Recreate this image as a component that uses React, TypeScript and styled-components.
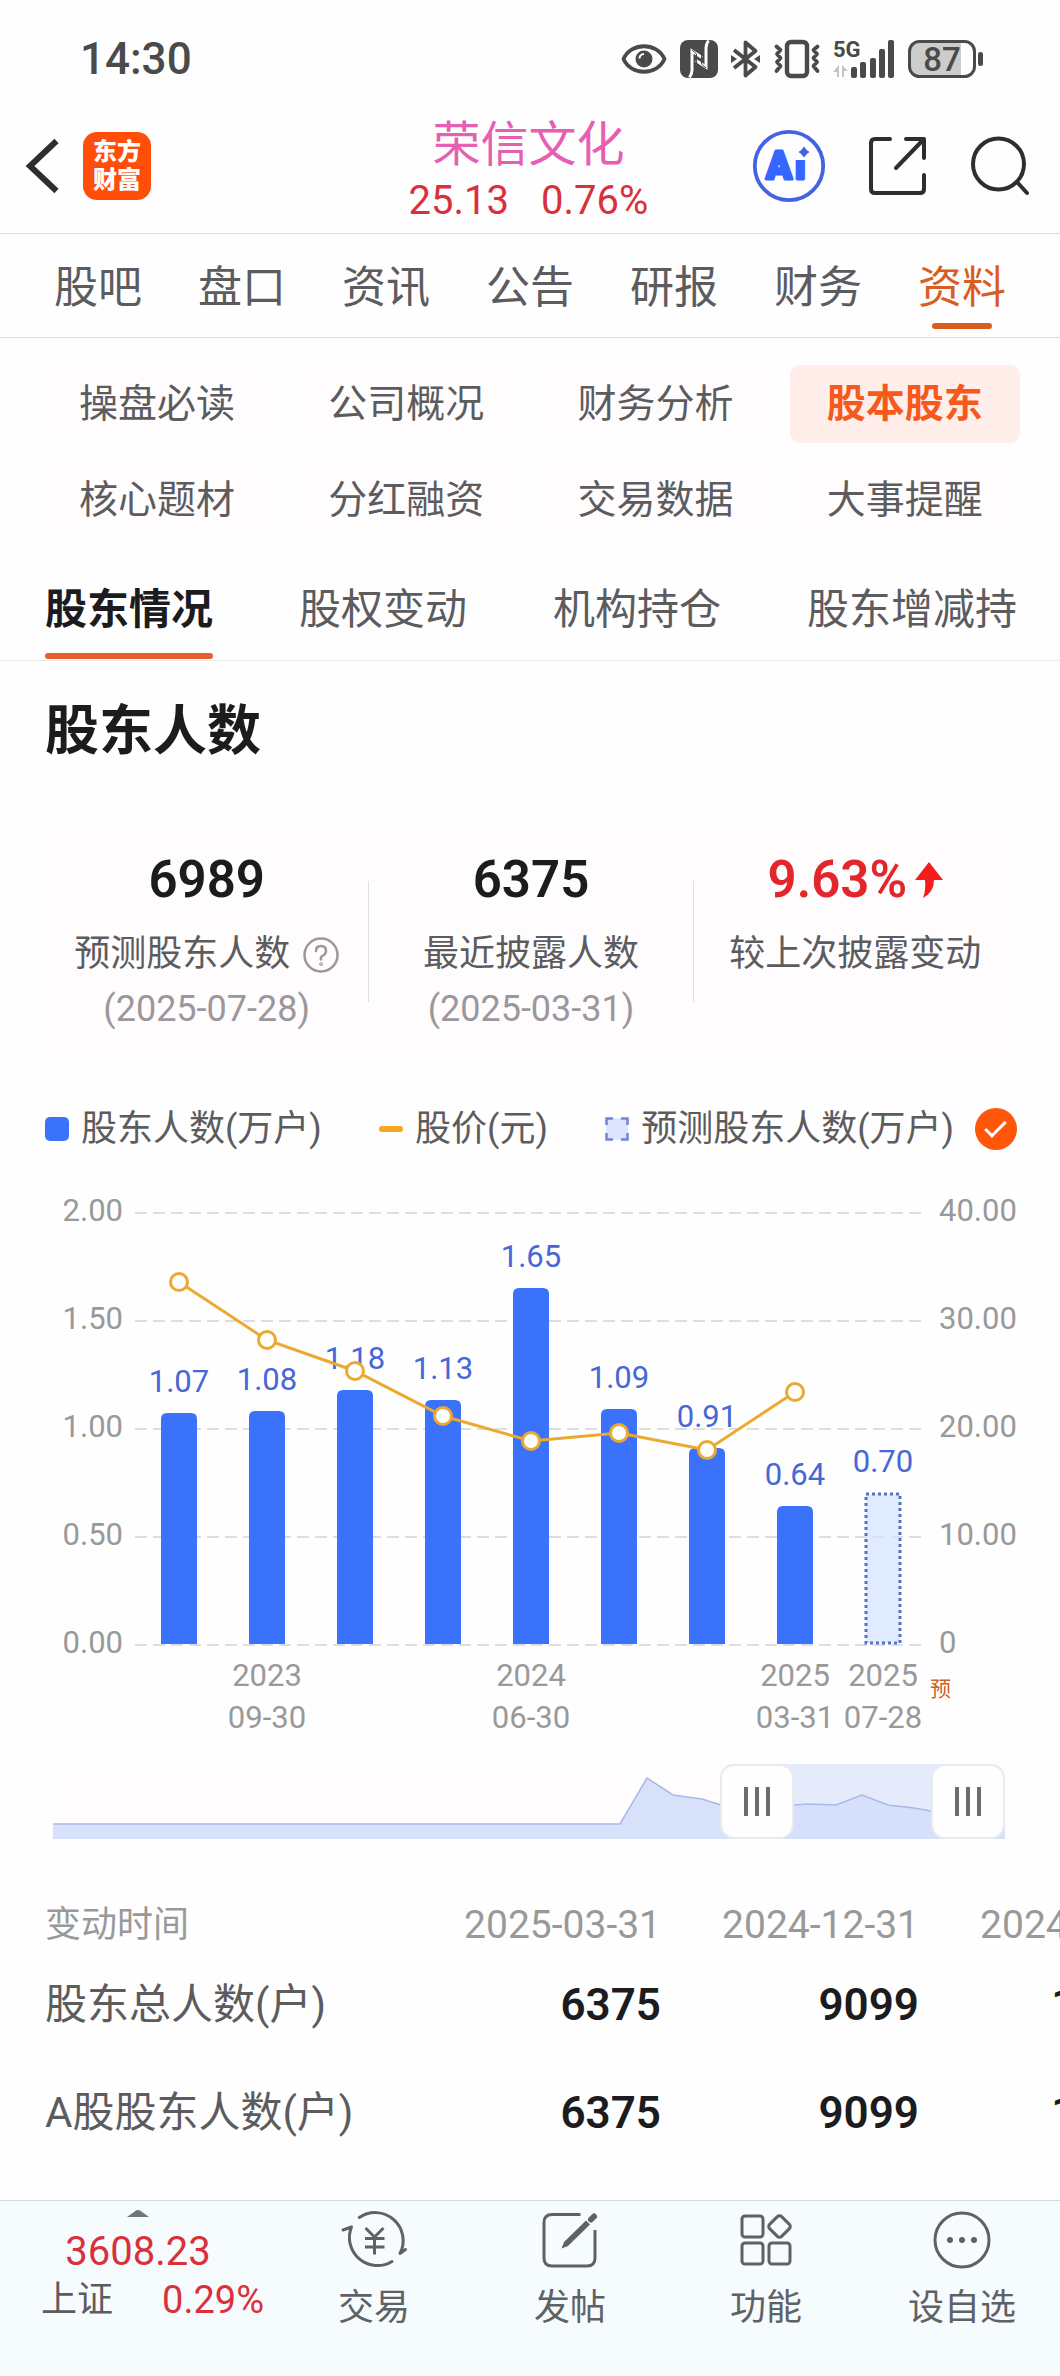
import React, { useState } from 'react';
import styled, { createGlobalStyle, css } from 'styled-components';

const color = {
  page: '#fefefe',
  ink: '#1c1c1e',
  text: '#5c5c5e',
  muted: '#999999',
  line: '#dcdcde',
  orange: '#d95c20',
  brand: '#ff4d0a',
  red: '#d9303a',
  blue: '#3b72fb',
  label: '#4767d6',
  price: '#eca92f',
};

const GlobalStyle = createGlobalStyle`
  *, *::before, *::after { box-sizing: border-box; }
  body {
    margin: 0;
    background: ${color.page};
    color: ${color.text};
    font-family: Roboto, "Noto Sans CJK SC", sans-serif;
  }
  button {
    padding: 0;
    border: 0;
    background: none;
    color: inherit;
    font: inherit;
    cursor: pointer;
  }
  a { color: inherit; text-decoration: none; }
  svg { display: block; overflow: visible; }
`;

const Page = styled.div`
  width: 100%;
  overflow-x: hidden;
  background: ${color.page};
`;

/* ---------- status bar ---------- */

const StatusBar = styled.div`
  display: flex;
  align-items: center;
  justify-content: space-between;
  height: 99px;
  padding: 18px 76px 0 80px;
  color: #4a4a4a;
`;

const Clock = styled.time`
  font-size: 44px;
  line-height: 48px;
  font-weight: 500;
`;

const StatusIcons = styled.div`
  display: flex;
  align-items: center;
  gap: 13px;
`;

/* ---------- header ---------- */

const Header = styled.header`
  display: grid;
  grid-template-columns: 1fr auto 1fr;
  align-items: center;
  height: 135px;
  padding: 0 30px 0 27px;
  border-bottom: 1px solid ${color.line};
`;

const HeaderStart = styled.div`
  display: flex;
  align-items: center;
  gap: 24px;
`;

const HeaderEnd = styled.div`
  display: flex;
  align-items: center;
  justify-content: flex-end;
  gap: 44px;
`;

const AppLogo = styled.span`
  display: flex;
  align-items: center;
  justify-content: center;
  width: 68px;
  height: 68px;
  border-radius: 14px;
  background: ${color.brand};
  color: #fff;
  font-size: 24px;
  line-height: 28px;
  font-weight: 900;
  text-align: center;
`;

const StockTitle = styled.div`
  padding-top: 14px;
  text-align: center;
`;

const StockName = styled.h1`
  margin: 0;
  color: #e65fb0;
  font-size: 48px;
  line-height: 56px;
  font-weight: 400;
`;

const Quote = styled.div`
  display: flex;
  justify-content: center;
  gap: 32px;
  color: ${color.red};
  font-size: 40px;
  line-height: 56px;
`;

/* ---------- navigation ---------- */

const MainTabs = styled.nav`
  display: grid;
  grid-template-columns: repeat(7, 1fr);
  padding: 0 26px;
  border-bottom: 1px solid ${color.line};
`;

const MainTab = styled.a<{ $active?: boolean }>`
  position: relative;
  padding-top: 5px;
  font-size: 44px;
  line-height: 98px;
  text-align: center;
  ${(p) =>
    p.$active &&
    css`
      color: ${color.orange};
      &::after {
        content: '';
        position: absolute;
        bottom: 8px;
        left: 50%;
        width: 60px;
        height: 6px;
        margin-left: -30px;
        border-radius: 3px;
        background: ${color.orange};
      }
    `}
`;

const Pills = styled.nav`
  display: grid;
  grid-template-columns: repeat(4, 1fr);
  gap: 18px 19px;
  padding: 27px 40px 17px 42px;
`;

const Pill = styled.a<{ $active?: boolean }>`
  border-radius: 10px;
  background: ${(p) => (p.$active ? '#ffeee9' : '#fffcfe')};
  color: ${(p) => (p.$active ? '#f55a1c' : color.text)};
  font-size: 39px;
  line-height: 78px;
  font-weight: ${(p) => (p.$active ? 700 : 400)};
  text-align: center;
`;

const SubTabs = styled.nav`
  display: flex;
  justify-content: space-between;
  padding: 0 43px 0 45px;
  border-bottom: 1px solid #ececee;
`;

const SubTab = styled.a<{ $active?: boolean }>`
  position: relative;
  padding-top: 4px;
  font-size: 42px;
  line-height: 100px;
  ${(p) =>
    p.$active &&
    css`
      color: ${color.ink};
      font-weight: 700;
      &::after {
        content: '';
        position: absolute;
        right: 0;
        bottom: 1px;
        left: 0;
        height: 6px;
        border-radius: 3px;
        background: #e4602e;
      }
    `}
`;

/* ---------- summary ---------- */

const SectionTitle = styled.h2`
  margin: 0;
  padding: 39px 45px 53px;
  color: ${color.ink};
  font-size: 54px;
  line-height: 64px;
  font-weight: 700;
`;

const Summary = styled.section`
  display: flex;
  align-items: center;
  margin: 0 43px 0 45px;
  border-radius: 14px;
  background: #fffcfe;
`;

const Divider = styled.span`
  width: 1px;
  height: 121px;
  background: #dedee8;
`;

const Stat = styled.div`
  display: flex;
  flex: 1;
  flex-direction: column;
  align-items: center;
  align-self: stretch;
  padding: 33px 0 28px;
`;

const StatValue = styled.div<{ $up?: boolean }>`
  display: flex;
  align-items: center;
  gap: 8px;
  margin-bottom: 17px;
  color: ${(p) => (p.$up ? '#e3262c' : color.ink)};
  font-size: 51px;
  line-height: 60px;
  font-weight: 600;
`;

const StatLabel = styled.div`
  display: flex;
  align-items: center;
  gap: 13px;
  font-size: 36px;
  line-height: 55px;
`;

const StatDate = styled.div`
  color: #9c979c;
  font-size: 36px;
  line-height: 55px;
`;

/* ---------- legend ---------- */

const Legend = styled.div`
  display: flex;
  align-items: center;
  justify-content: space-between;
  padding: 41px 43px 0 45px;
`;

const LegendItem = styled.span`
  display: flex;
  align-items: center;
  gap: 12px;
  font-size: 36px;
  line-height: 46px;
`;

const BarKey = styled.i`
  width: 24px;
  height: 24px;
  border-radius: 5px;
  background: ${color.blue};
`;

const LineKey = styled.i`
  width: 24px;
  height: 6px;
  border-radius: 3px;
  background: #f5a623;
`;

const ForecastToggle = styled.label`
  display: flex;
  align-items: center;
  gap: 21px;
`;

const CheckBox = styled.input`
  display: grid;
  place-items: center;
  appearance: none;
  width: 42px;
  height: 42px;
  margin: 0;
  border-radius: 50%;
  background: #d5d5d8;
  &:checked { background: #ff560a; }
  &::after {
    content: '';
    width: 21px;
    height: 11px;
    border: solid #fff;
    border-width: 0 0 3px 3px;
    margin-bottom: 6px;
    transform: rotate(-45deg);
  }
`;

const ChartSvg = styled.svg`
  width: 100%;
  height: auto;
  font-size: 31px;
`;

/* ---------- range brush ---------- */

const Brush = styled.div`
  position: relative;
  height: 75px;
  margin: 24px 55px 0 53px;
  background: #fffcfe;
`;

const BrushSvg = styled.svg`
  width: 100%;
  height: 100%;
`;

const BrushInput = styled.input`
  position: absolute;
  inset: 0;
  width: 100%;
  height: 100%;
  margin: 0;
  appearance: none;
  background: none;
  pointer-events: none;
  &::-webkit-slider-thumb {
    appearance: none;
    width: 74px;
    height: 75px;
    border: 2px solid #e9e9ee;
    border-radius: 14px;
    background:
      linear-gradient(#6c6c6e, #6c6c6e) 22px 50% / 4px 29px no-repeat,
      linear-gradient(#6c6c6e, #6c6c6e) 33px 50% / 4px 29px no-repeat,
      linear-gradient(#6c6c6e, #6c6c6e) 44px 50% / 4px 29px no-repeat,
      #fefefe;
    pointer-events: auto;
  }
`;

/* ---------- table ---------- */

const TableScroller = styled.div`
  overflow: hidden;
  padding: 60px 0 33px 45px;
`;

const DataTable = styled.table`
  width: 1132px;
  table-layout: fixed;
  border-collapse: collapse;
`;

const LabelCol = styled.col`
  width: 358px;
`;

const HeadCell = styled.th`
  height: 52px;
  padding: 0;
  color: ${color.muted};
  font-size: 39px;
  line-height: 52px;
  font-weight: 400;
  text-align: right;
  &:first-child {
    font-size: 36px;
    text-align: left;
  }
`;

const RowLabel = styled.th`
  height: 108px;
  padding: 0;
  font-size: 42px;
  line-height: 56px;
  font-weight: 400;
  text-align: left;
`;

const ValueCell = styled.td`
  height: 108px;
  padding: 0;
  color: ${color.ink};
  font-size: 44px;
  line-height: 56px;
  font-weight: 600;
  text-align: right;
`;

/* ---------- bottom bar ---------- */

const BottomBar = styled.footer`
  display: flex;
  height: 176px;
  border-top: 1px solid #d6d9de;
  background: #f6fbfe;
`;

const IndexPanel = styled.button`
  display: flex;
  flex-direction: column;
  align-items: center;
  width: 276px;
  padding-top: 9px;
`;

const IndexValue = styled.span`
  margin-top: 10px;
  color: ${color.red};
  font-size: 40px;
  line-height: 49px;
`;

const IndexRow = styled.span`
  display: flex;
  justify-content: space-between;
  width: 100%;
  padding: 0 12px 0 41px;
  font-size: 36px;
  line-height: 49px;
`;

const IndexChange = styled.span`
  color: ${color.red};
  font-size: 38px;
`;

const Actions = styled.nav`
  display: grid;
  flex: 1;
  grid-template-columns: repeat(4, 1fr);
`;

const Action = styled.button`
  display: flex;
  flex-direction: column;
  align-items: center;
  gap: 14px;
  padding-top: 9px;
  color: #5e6265;
  font-size: 36px;
  line-height: 49px;
`;

/* ---------- icons ---------- */

const EyeIcon = () => (
  <svg width="46" height="38" viewBox="0 0 46 38">
    <path d="M2.500 19C10 2 36 2 43.500 19C36 36 10 36 2.500 19Z" fill="none" stroke="#4a4a4a" strokeWidth="3.800" strokeLinejoin="round" />
    <circle cx="23" cy="19" r="8.500" fill="#4a4a4a" />
    <path d="M18.500 18.500a4.500 4.500 0 0 1 4.500-4.500" fill="none" stroke="#fefefe" strokeWidth="2" />
  </svg>
);

const NfcIcon = () => (
  <svg width="38" height="38" viewBox="0 0 38 38">
    <rect width="38" height="38" rx="8" fill="#4a4a4a" />
    <path d="M8 9.500L23 24.500M15 14L30 28.500" fill="none" stroke="#4a4a4a" strokeWidth="2" />
    <path d="M9.500 37.500Q12 34 12 30V11L22 17.500M28.500 .5Q26 4 26 8V27L16 20.500" fill="none" stroke="#fefefe" strokeWidth="3" />
    <path d="M12 10L16.500 14V30M26 28L21.500 24V8" fill="none" stroke="#4a4a4a" strokeWidth="1" />
  </svg>
);

const BluetoothIcon = () => (
  <svg width="30" height="38" viewBox="0 0 30 38">
    <path d="M3 10L24.500 27L14.500 35.500V2.500L24.500 11L3 28" fill="none" stroke="#4a4a4a" strokeWidth="3.800" strokeLinejoin="round" />
    <path d="M0 15L6 19L0 23ZM29 15L23 19L29 23Z" fill="#4a4a4a" />
  </svg>
);

const VibrateIcon = () => (
  <svg width="46" height="38" viewBox="0 0 46 38" fill="none" stroke="#4a4a4a" strokeLinecap="round" strokeLinejoin="round">
    <rect x="13" y="2" width="20" height="34" rx="4" strokeWidth="4.400" />
    <path d="M2.500 6.500L6.500 10L3 14L6.500 18L3 22L6.500 26L2.500 31M43.500 6.500L39.500 10L43 14L39.500 18L43 22L39.500 26L43.500 31" strokeWidth="3.800" />
  </svg>
);

const SignalIcon = () => (
  <svg width="62" height="38" viewBox="0 0 62 38">
    <text x="0" y="17" fontSize="22" fontWeight="700" fill="#4a4a4a">5G</text>
    <path d="M6 25V37H4V32H0ZM9 25L15 31H11V37H9Z" fill="#c4c4c4" />
    <g fill="#4a4a4a">
      <rect x="18" y="27" width="6" height="11" rx="2" />
      <rect x="27" y="22" width="6" height="16" rx="2" />
      <rect x="37" y="18" width="6" height="20" rx="2" />
      <rect x="46" y="9" width="6" height="29" rx="2" />
      <rect x="55" y="0" width="6" height="38" rx="2" />
    </g>
  </svg>
);

const BatteryIcon = () => (
  <svg width="76" height="38" viewBox="0 0 76 38">
    <path d="M12 2H53V36H12Q2 36 2 26V12Q2 2 12 2Z" fill="#cccccc" />
    <rect x="1.500" y="1.500" width="65" height="35" rx="10" fill="none" stroke="#4a4a4a" strokeWidth="3" />
    <rect x="70" y="12" width="5" height="14" rx="2.500" fill="#4a4a4a" />
    <text x="34" y="30.500" fontSize="33" fontWeight="500" textAnchor="middle" fill="#4a4a4a">87</text>
  </svg>
);

const BackIcon = () => (
  <svg width="32" height="56" viewBox="0 0 32 56">
    <path d="M29.500 3L3 28L29.500 53" fill="none" stroke="#2e2e30" strokeWidth="6" />
  </svg>
);

const AiIcon = () => (
  <svg width="72" height="72" viewBox="0 0 72 72">
    <circle cx="36" cy="36" r="34.200" fill="none" stroke="#4463e2" strokeWidth="3.800" />
    <text x="13" y="49" fontSize="38" fontWeight="900" fill="#3566ff" stroke="#3566ff" strokeWidth="3" strokeLinejoin="round">
      A<tspan dx="3">i</tspan>
    </text>
    <rect x="41" y="14" width="18" height="16" fill="#fefefe" />
    <path d="M51 16.500Q53 20 56.500 22Q53 24 51 27.500Q49 24 45.500 22Q49 20 51 16.500Z" fill="#4463e2" />
  </svg>
);

const ShareIcon = () => (
  <svg width="58" height="60" viewBox="0 0 58 60" fill="none" stroke="#2e2e30" strokeWidth="4" strokeLinecap="round" strokeLinejoin="round">
    <path d="M21 3H6Q2 3 2 7V53Q2 57 6 57H51Q55 57 55 53V39M37 3H55V22M55 3L27 32" />
  </svg>
);

const SearchIcon = () => (
  <svg width="59" height="60" viewBox="0 0 59 60" fill="none" stroke="#2e2e30" strokeWidth="4" strokeLinecap="round">
    <circle cx="27.500" cy="28" r="25.500" />
    <path d="M46 46L56 57" />
  </svg>
);

const HelpIcon = () => (
  <svg width="36" height="36" viewBox="0 0 36 36" fill="none" stroke="#9c979c" strokeWidth="2.500" strokeLinecap="round">
    <circle cx="18" cy="18" r="16.500" />
    <path d="M13 14Q13 9 18 9T23 14Q23 17 20 18.500T18 22.500" />
    <circle cx="18" cy="27" r=".6" />
  </svg>
);

const UpArrow = () => (
  <svg width="28" height="38" viewBox="0 0 28 38">
    <path d="M14 1L28 19H19Q19 31 8 37Q11 29 10 19H0Z" fill="#f51c1c" />
  </svg>
);

const ForecastKey = () => (
  <svg width="24" height="24" viewBox="0 0 24 24">
    <rect x="1" y="1" width="22" height="22" fill="#dde5fc" />
    <path d="M1.500 8V1.500H8M16 1.500H22.500V8M22.500 16V22.500H16M8 22.500H1.500V16" fill="none" stroke="#6f84dc" strokeWidth="2.500" />
  </svg>
);

const Caret = () => (
  <svg width="22" height="7" viewBox="0 0 22 7">
    <path d="M0 7L9 .5Q11-.5 13 .5L22 7Z" fill="#6f7578" />
  </svg>
);

const actionSvg = { height: 60, fill: 'none', stroke: '#5e6265', strokeWidth: 3, strokeLinecap: 'round', strokeLinejoin: 'round' } as const;

const TradeIcon = () => (
  <svg width="66" viewBox="0 0 66 60" {...actionSvg}>
    <path d="M18.300 7.500A28 28 0 0 1 59 43.500L64.500 39.500M51 51.500A28 28 0 0 1 10.500 17L2 20" />
    <path d="M24.500 18L33.500 27L42.500 18M24 28.500H43.500M24 37H43.500M33.500 27V44.500" strokeLinecap="butt" />
  </svg>
);

const PostIcon = () => (
  <svg width="56" viewBox="0 0 56 60" {...actionSvg}>
    <path d="M38.500 4.500H10Q2 4.500 2 12.500V48Q2 56 10 56H45Q53 56 53 48V20" strokeLinecap="butt" />
    <path d="M19.500 38.500L22 32L44 10.500L48 14.500L26 36Z" fill="#5e6265" stroke="none" />
    <path d="M49 9.500L52 6.500" strokeWidth="6" />
  </svg>
);

const FeaturesIcon = () => (
  <svg width="52" viewBox="0 0 52 60" {...actionSvg}>
    <rect x="2" y="6" width="21" height="21" rx="3" />
    <rect x="2" y="33" width="21" height="21" rx="3" />
    <rect x="29" y="33" width="21" height="21" rx="3" />
    <rect x="31" y="8" width="17" height="17" rx="3" transform="rotate(45 39.500 16.500)" />
  </svg>
);

const MoreIcon = () => (
  <svg width="58" viewBox="0 0 58 60" {...actionSvg}>
    <circle cx="29" cy="30" r="27" />
    <g fill="#5e6265" stroke="none">
      <circle cx="17" cy="30" r="3" />
      <circle cx="29" cy="30" r="3" />
      <circle cx="41" cy="30" r="3" />
    </g>
  </svg>
);

/* ---------- chart ---------- */

type Point = { holders: number; price?: number; date?: [string, string]; forecast?: boolean };

const points: Point[] = [
  { holders: 1.07, price: 33.6 },
  { holders: 1.08, price: 28.2, date: ['2023', '09-30'] },
  { holders: 1.18, price: 25.4 },
  { holders: 1.13, price: 21.25 },
  { holders: 1.65, price: 18.9, date: ['2024', '06-30'] },
  { holders: 1.09, price: 19.6 },
  { holders: 0.91, price: 18.05 },
  { holders: 0.64, price: 23.4, date: ['2025', '03-31'] },
  { holders: 0.7, date: ['2025', '07-28'], forecast: true },
];

const BASE = 493;
const STEP = 108;
const centerX = (i: number) => 179 + i * 88;
const holdersY = (v: number) => Math.floor(BASE - v * STEP * 2);
const priceY = (v: number) => Math.round(BASE - (v * STEP) / 10);

const ticks = [
  ['0.00', '0'],
  ['0.50', '10.00'],
  ['1.00', '20.00'],
  ['1.50', '30.00'],
  ['2.00', '40.00'],
];

function HoldersChart({ showForecast }: { showForecast: boolean }) {
  const shown = points.filter((p) => showForecast || !p.forecast);
  const line = points
    .map((p, i) => (p.price === undefined ? '' : `${centerX(i)},${priceY(p.price)}`))
    .join(' ')
    .trim();
  return (
    <ChartSvg viewBox="0 0 1060 588" role="img" aria-label="股东人数与股价">
      {ticks.map(([left, right], i) => (
        <g key={left} fill={color.muted}>
          <line x1="135" x2="922" y1={BASE - i * STEP} y2={BASE - i * STEP} stroke="#dedee0" strokeWidth="2" strokeDasharray="12 6" />
          <text x="123" y={BASE + 8 - i * STEP} textAnchor="end">{left}</text>
          <text x="939" y={BASE + 8 - i * STEP}>{right}</text>
        </g>
      ))}
      {shown.map((p, i) => {
        const x = centerX(i);
        const y = holdersY(p.holders);
        return (
          <g key={i}>
            {p.forecast ? (
              <rect x={x - 17} y={y + 1} width="34" height={BASE - y - 3} fill="#d3e3ff" fillOpacity=".7" stroke="#5670c4" strokeWidth="3" strokeDasharray="3 3" />
            ) : (
              <path d={`M${x - 18} ${BASE - 1}V${y + 6}q0-6 6-6h24q6 0 6 6V${BASE - 1}z`} fill={color.blue} />
            )}
            <text x={x} y={y - 21} textAnchor="middle" fill={color.label}>{p.holders.toFixed(2)}</text>
            {p.date && (
              <g fill={color.muted} textAnchor="middle">
                <text x={x} y={BASE + 41}>{p.date[0]}</text>
                <text x={x} y={BASE + 83}>{p.date[1]}</text>
              </g>
            )}
          </g>
        );
      })}
      {showForecast && <text x="930" y="544" fontSize="21" fill="#d2601e">预</text>}
      <polyline points={line} fill="none" stroke={color.price} strokeWidth="3" />
      {points.map((p, i) =>
        p.price === undefined ? null : (
          <circle key={i} cx={centerX(i)} cy={priceY(p.price)} r="8.500" fill="#fff" stroke={color.price} strokeWidth="3" />
        ),
      )}
    </ChartSvg>
  );
}

const BRUSH_MAX = 1000;

function RangeBrush() {
  const [start, setStart] = useState(760);
  const [end, setEnd] = useState(BRUSH_MAX);
  const profile = '0,60 567,60 594,14 620,31 649,35 668,41 741,41 755,40 783,41 809,31 835,41 861,44 878,47 952,52';
  const at = (v: number) => 37 + (v / BRUSH_MAX) * 878;
  return (
    <Brush>
      <BrushSvg viewBox="0 0 952 75" preserveAspectRatio="none">
        <rect x={at(start)} width={at(end) - at(start)} height="75" fill="#e6ebfc" />
        <polygon points={`0,75 ${profile} 952,75`} fill="#d5dffa" fillOpacity=".95" />
        <polyline points={profile} fill="none" stroke="#a9b9e6" strokeWidth="1.500" />
      </BrushSvg>
      <BrushInput type="range" aria-label="开始" min={0} max={BRUSH_MAX} value={start} onChange={(e) => setStart(Math.min(+e.target.value, end))} />
      <BrushInput type="range" aria-label="结束" min={0} max={BRUSH_MAX} value={end} onChange={(e) => setEnd(Math.max(+e.target.value, start))} />
    </Brush>
  );
}

/* ---------- page ---------- */

const mainTabs = ['股吧', '盘口', '资讯', '公告', '研报', '财务', '资料'];
const pills = ['操盘必读', '公司概况', '财务分析', '股本股东', '核心题材', '分红融资', '交易数据', '大事提醒'];
const subTabs = ['股东情况', '股权变动', '机构持仓', '股东增减持'];
const dates = ['2025-03-31', '2024-12-31', '2024-09-30'];
const rows = [
  { label: '股东总人数(户)', values: ['6375', '9099', '10948'] },
  { label: 'A股股东人数(户)', values: ['6375', '9099', '10948'] },
];
const actions = [
  { label: '交易', Icon: TradeIcon },
  { label: '发帖', Icon: PostIcon },
  { label: '功能', Icon: FeaturesIcon },
  { label: '设自选', Icon: MoreIcon },
];

export default function App() {
  const [forecast, setForecast] = useState(true);
  return (
    <Page>
      <GlobalStyle />
      <StatusBar>
        <Clock>14:30</Clock>
        <StatusIcons>
          <EyeIcon />
          <NfcIcon />
          <BluetoothIcon />
          <VibrateIcon />
          <SignalIcon />
          <BatteryIcon />
        </StatusIcons>
      </StatusBar>

      <Header>
        <HeaderStart>
          <button aria-label="返回"><BackIcon /></button>
          <AppLogo>东方<br />财富</AppLogo>
        </HeaderStart>
        <StockTitle>
          <StockName>荣信文化</StockName>
          <Quote>
            <span>25.13</span>
            <span>0.76%</span>
          </Quote>
        </StockTitle>
        <HeaderEnd>
          <button aria-label="智能助手"><AiIcon /></button>
          <button aria-label="分享"><ShareIcon /></button>
          <button aria-label="搜索"><SearchIcon /></button>
        </HeaderEnd>
      </Header>

      <MainTabs>
        {mainTabs.map((t) => (
          <MainTab key={t} href="#" $active={t === '资料'}>{t}</MainTab>
        ))}
      </MainTabs>

      <Pills>
        {pills.map((t) => (
          <Pill key={t} href="#" $active={t === '股本股东'}>{t}</Pill>
        ))}
      </Pills>

      <SubTabs>
        {subTabs.map((t) => (
          <SubTab key={t} href="#" $active={t === '股东情况'}>{t}</SubTab>
        ))}
      </SubTabs>

      <main>
        <SectionTitle>股东人数</SectionTitle>
        <Summary>
          <Stat>
            <StatValue>6989</StatValue>
            <StatLabel>
              预测股东人数
              <button aria-label="说明"><HelpIcon /></button>
            </StatLabel>
            <StatDate>(2025-07-28)</StatDate>
          </Stat>
          <Divider />
          <Stat>
            <StatValue>6375</StatValue>
            <StatLabel>最近披露人数</StatLabel>
            <StatDate>(2025-03-31)</StatDate>
          </Stat>
          <Divider />
          <Stat>
            <StatValue $up>9.63%<UpArrow /></StatValue>
            <StatLabel>较上次披露变动</StatLabel>
          </Stat>
        </Summary>

        <Legend>
          <LegendItem><BarKey />股东人数(万户)</LegendItem>
          <LegendItem><LineKey />股价(元)</LegendItem>
          <ForecastToggle>
            <LegendItem><ForecastKey />预测股东人数(万户)</LegendItem>
            <CheckBox type="checkbox" checked={forecast} onChange={(e) => setForecast(e.target.checked)} />
          </ForecastToggle>
        </Legend>

        <HoldersChart showForecast={forecast} />
        <RangeBrush />

        <TableScroller>
          <DataTable>
            <colgroup>
              <LabelCol />
              {dates.map((d) => <col key={d} />)}
            </colgroup>
            <thead>
              <tr>
                <HeadCell scope="col">变动时间</HeadCell>
                {dates.map((d) => <HeadCell key={d} scope="col">{d}</HeadCell>)}
              </tr>
            </thead>
            <tbody>
              {rows.map((r) => (
                <tr key={r.label}>
                  <RowLabel scope="row">{r.label}</RowLabel>
                  {r.values.map((v, i) => <ValueCell key={i}>{v}</ValueCell>)}
                </tr>
              ))}
            </tbody>
          </DataTable>
        </TableScroller>
      </main>

      <BottomBar>
        <IndexPanel>
          <Caret />
          <IndexValue>3608.23</IndexValue>
          <IndexRow>
            上证
            <IndexChange>0.29%</IndexChange>
          </IndexRow>
        </IndexPanel>
        <Actions>
          {actions.map(({ label, Icon }) => (
            <Action key={label}>
              <Icon />
              {label}
            </Action>
          ))}
        </Actions>
      </BottomBar>
    </Page>
  );
}
